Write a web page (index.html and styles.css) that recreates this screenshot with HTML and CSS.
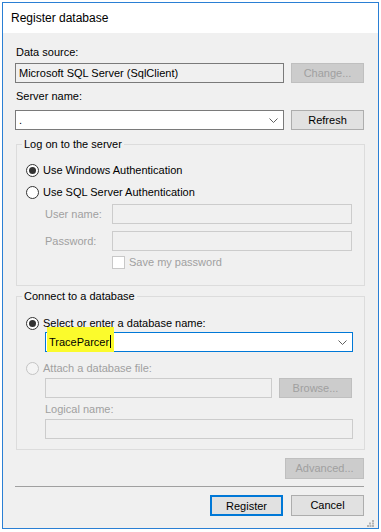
FILE: index.html
```html
<!DOCTYPE html>
<html lang="en">
<head>
    <meta charset="UTF-8">
    <title>Register database</title>
    <link rel="stylesheet" href="styles.css">
</head>
<body>
    <div class="dialog">
        <div class="titlebar">Register database</div>
        <div class="content">
            <div class="label first">Data source:</div>
            <div class="row">
                <div class="field readonly">Microsoft SQL Server (SqlClient)</div>
                <div class="btn disabled">Change...</div>
            </div>
            <div class="label">Server name:</div>
            <div class="row">
                <div class="field combo">.<svg class="chevron" width="9" height="5" viewBox="0 0 9 5"><polyline points="0.5,0.5 4.5,4.5 8.5,0.5" fill="none" stroke="#5f5f5f" stroke-width="1"/></svg></div>
                <div class="btn">Refresh</div>
            </div>

            <fieldset class="group logon">
                <legend>Log on to the server</legend>
                <div class="option first-option"><span class="radio on"></span>Use Windows Authentication</div>
                <div class="option"><span class="radio"></span>Use SQL Server Authentication</div>
                <div class="cred">
                    <span class="cred-label">User name:</span>
                    <div class="field disabled-field cred-box"></div>
                </div>
                <div class="cred second">
                    <span class="cred-label">Password:</span>
                    <div class="field disabled-field cred-box"></div>
                </div>
                <div class="check-row"><span class="checkbox"></span>Save my password</div>
            </fieldset>

            <fieldset class="group connect">
                <legend>Connect to a database</legend>
                <div class="option small first-option"><span class="radio on"></span>Select or enter a database name:</div>
                <div class="field combo focused db-combo">
                    <span class="marker"></span>
                    <span class="db-text">TraceParcer<span class="caret"></span></span>
                    <svg class="chevron" width="9" height="5" viewBox="0 0 9 5"><polyline points="0.5,0.5 4.5,4.5 8.5,0.5" fill="none" stroke="#5f5f5f" stroke-width="1"/></svg>
                </div>
                <div class="option small muted attach"><span class="radio off"></span>Attach a database file:</div>
                <div class="file-row">
                    <div class="field disabled-field file-box"></div>
                    <div class="btn disabled browse">Browse...</div>
                </div>
                <div class="sub-label">Logical name:</div>
                <div class="field disabled-field logical-box"></div>
            </fieldset>

            <div class="advanced-row">
                <div class="btn disabled advanced">Advanced...</div>
            </div>
            <div class="separator"></div>
            <div class="actions">
                <div class="btn default">Register</div>
                <div class="btn">Cancel</div>
            </div>
        </div>
        <svg class="grip" width="7" height="7" viewBox="0 0 7 7">
            <rect x="5" y="0" width="2" height="2" fill="#b4b4b4"/>
            <rect x="2" y="2.5" width="2" height="2" fill="#b4b4b4"/>
            <rect x="5" y="2.5" width="2" height="2" fill="#b4b4b4"/>
            <rect x="0" y="5" width="2" height="2" fill="#b4b4b4"/>
            <rect x="2.5" y="5" width="2" height="2" fill="#b4b4b4"/>
            <rect x="5" y="5" width="2" height="2" fill="#b4b4b4"/>
        </svg>
    </div>
</body>
</html>
```

FILE: styles.css
```css
body {
    margin: 0;
    background: #ffffff;
    color: #000000;
    font-family: "Liberation Sans", Arial, sans-serif;
    font-size: 11px;
}
.dialog {
    position: relative;
    margin: 2px 0 0 2px;
    width: 377px;
    height: 527px;
    box-sizing: border-box;
    border: 1px solid #2a7fd4;
    background: #f0f0f0;
}
.titlebar {
    height: 30px;
    line-height: 30px;
    padding-left: 8px;
    background: #ffffff;
    font-size: 12px;
}
.content {
    padding: 0 14px 0 12px;
}
.label {
    height: 15px;
    line-height: 15px;
    margin-top: 6px;
    padding-left: 1px;
}
.label.first {
    margin-top: 12px;
}
.row {
    display: flex;
    gap: 7px;
    margin-top: 3px;
}
.label + .row {
    margin-top: 6px;
}
.label.first + .row {
    margin-top: 3px;
}
.field {
    position: relative;
    box-sizing: border-box;
    height: 20px;
    line-height: 18px;
    padding-left: 3px;
    border: 1px solid #7a7a7a;
    background: #ffffff;
}
.row .field {
    flex: 1;
}
.field.readonly {
    background: #f0f0f0;
}
.disabled-field {
    border-color: #cccccc;
    background: #f0f0f0;
}
.chevron {
    position: absolute;
    right: 5px;
    top: 7px;
}
.btn {
    box-sizing: border-box;
    width: 73px;
    height: 20px;
    line-height: 18px;
    text-align: center;
    border: 1px solid #adadad;
    background: #e1e1e1;
}
.btn.disabled {
    border-color: #bfbfbf;
    background: #cccccc;
    color: #a0a0a0;
}
.btn.default {
    border: 2px solid #0078d7;
    line-height: 17px;
}

/* group boxes */
.group {
    margin: 7px -1px 0 1px;
    padding: 0 0 16px 0;
    border: 1px solid #dcdcdc;
    min-inline-size: 0;
}
.group legend {
    margin-left: 5px;
    padding: 0 2px;
    line-height: 15px;
}
.connect {
    margin-top: 3px;
    padding-bottom: 10px;
}
.option {
    display: flex;
    align-items: center;
    gap: 4px;
    height: 20px;
    margin-top: 2px;
    padding-left: 9px;
}
.option.first-option {
    margin-top: 8px;
}
.option.small {
    height: 18px;
}
.connect .option.first-option {
    margin-top: 10px;
}
.option.attach {
    margin-top: 7px;
}
.muted,
.cred-label,
.check-row,
.sub-label {
    color: #a0a0a0;
}
.radio {
    position: relative;
    box-sizing: border-box;
    width: 13px;
    height: 13px;
    border: 1px solid #333333;
    border-radius: 50%;
    background: #ffffff;
}
.radio.on::after {
    content: "";
    position: absolute;
    left: 2px;
    top: 2px;
    width: 7px;
    height: 7px;
    border-radius: 50%;
    background: #333333;
}
.radio.off {
    border-color: #c4c4c4;
    background: #f4f4f4;
}
.cred {
    display: flex;
    align-items: center;
    margin-top: 2px;
    padding-left: 28px;
}
.cred.second {
    margin-top: 7px;
}
.cred-label {
    width: 67px;
}
.cred-box {
    width: 240px;
}
.check-row {
    display: flex;
    align-items: center;
    gap: 4px;
    height: 14px;
    margin-top: 4px;
    padding-left: 95px;
}
.checkbox {
    box-sizing: border-box;
    width: 13px;
    height: 13px;
    border: 1px solid #c8c8c8;
    background: #ffffff;
}

/* database name combo */
.db-combo {
    width: 308px;
    margin-left: 28px;
    border-color: #0078d7;
}
.marker {
    position: absolute;
    left: 1px;
    top: -6px;
    width: 67px;
    height: 25px;
    background: #fbfb2c;
}
.db-text {
    position: relative;
}
.caret {
    display: inline-block;
    width: 1px;
    height: 13px;
    margin-left: 1px;
    vertical-align: -2px;
    background: #000000;
}
.file-row {
    display: flex;
    gap: 7px;
    margin-top: 1px;
    padding-left: 28px;
}
.file-box {
    width: 227px;
}
.sub-label {
    height: 15px;
    line-height: 15px;
    margin-top: 4px;
    padding-left: 28px;
}
.logical-box {
    width: 308px;
    margin: 2px 0 0 28px;
}

/* footer */
.advanced-row {
    display: flex;
    justify-content: flex-end;
    margin-top: 8px;
}
.btn.advanced {
    width: 79px;
    height: 21px;
    line-height: 19px;
}
.separator {
    height: 1px;
    margin-top: 7px;
    background: #a0a0a0;
}
.actions {
    display: flex;
    justify-content: flex-end;
    gap: 8px;
    margin-top: 8px;
}
.actions .btn {
    height: 21px;
    line-height: 19px;
}
.grip {
    position: absolute;
    right: 4px;
    bottom: 1px;
}
```
